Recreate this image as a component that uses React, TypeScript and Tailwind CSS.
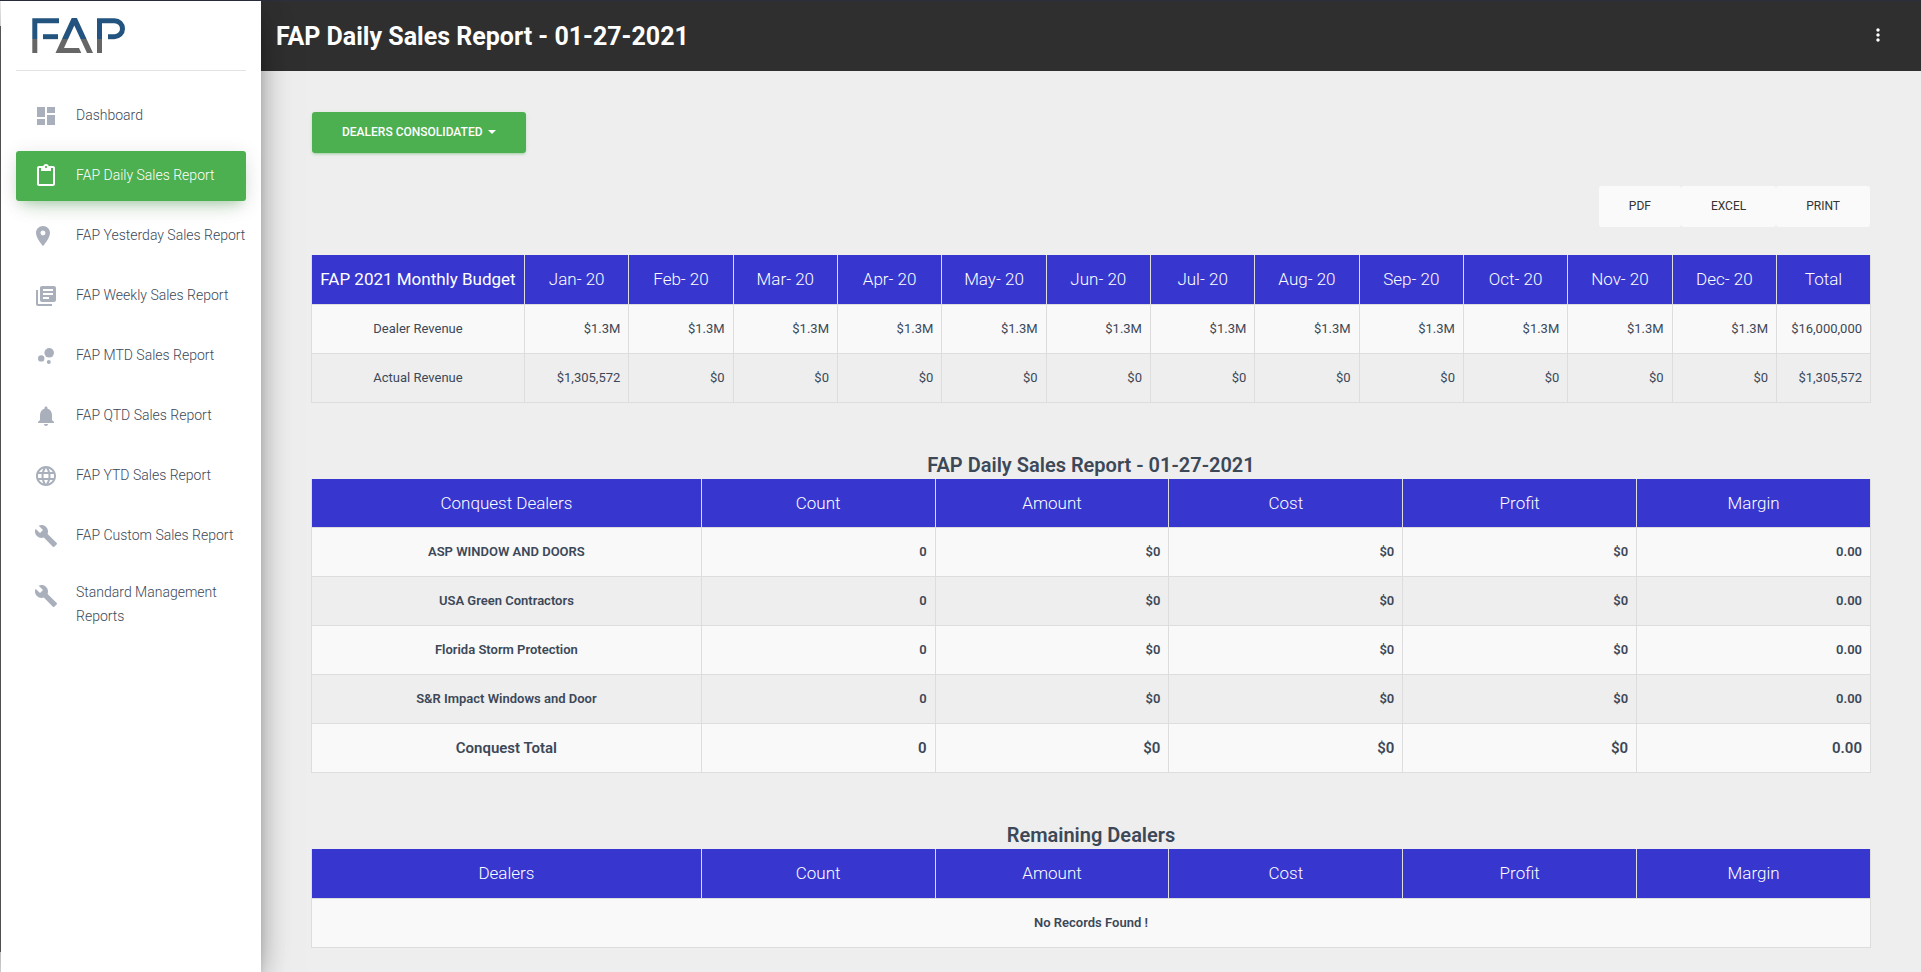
import React from "react";
import {
  MdBubbleChart,
  MdBuild,
  MdContentPaste,
  MdDashboard,
  MdLanguage,
  MdLibraryBooks,
  MdLocationOn,
  MdMoreVert,
  MdNotifications,
} from "react-icons/md";
import type { IconType } from "react-icons";
import clsx from "clsx";

type NavEntry = {
  label: string;
  icon: IconType;
  active?: boolean;
  iconStart?: boolean;
  wraps?: boolean;
};

const NAV: NavEntry[] = [
  { label: "Dashboard", icon: MdDashboard },
  { label: "FAP Daily Sales Report", icon: MdContentPaste, active: true },
  { label: "FAP Yesterday Sales Report", icon: MdLocationOn, iconStart: true },
  { label: "FAP Weekly Sales Report", icon: MdLibraryBooks },
  { label: "FAP MTD Sales Report", icon: MdBubbleChart },
  { label: "FAP QTD Sales Report", icon: MdNotifications },
  { label: "FAP YTD Sales Report", icon: MdLanguage },
  { label: "FAP Custom Sales Report", icon: MdBuild },
  { label: "Standard Management Reports", icon: MdBuild, wraps: true },
];

const MONTHS = ["Jan", "Feb", "Mar", "Apr", "May", "Jun", "Jul", "Aug", "Sep", "Oct", "Nov", "Dec"];

const BUDGET_ROWS = [
  { label: "Dealer Revenue", values: [...MONTHS.map(() => "$1.3M"), "$16,000,000"] },
  {
    label: "Actual Revenue",
    values: [...MONTHS.map((m) => (m === "Jan" ? "$1,305,572" : "$0")), "$1,305,572"],
  },
];

const DEALERS = [
  "ASP WINDOW AND DOORS",
  "USA Green Contractors",
  "Florida Storm Protection",
  "S&R Impact Windows and Door",
];

const FIGURE_COLUMNS = ["Count", "Amount", "Cost", "Profit", "Margin"];
const FIGURES = ["0", "$0", "$0", "$0", "0.00"];

const TABLE = "w-full table-fixed border-collapse text-[13px] leading-5";
const HEAD_CELL =
  "h-[49px] border-x border-b border-[#dddddd] px-0 text-center text-[17px] font-light whitespace-nowrap";
const CELL = "h-[49px] border border-[#dddddd] px-2";
const STRIPE = "odd:bg-[#f9f9f9]";

function Logo() {
  return (
    <svg viewBox="0 0 94 36" className="h-9 w-[94px]" role="img" aria-label="FAP" fill="none">
      <defs>
        <linearGradient id="logo-tone" gradientUnits="userSpaceOnUse" x1="0" y1="0" x2="0" y2="36">
          <stop offset="0.59" stopColor="#22547f" />
          <stop offset="0.59" stopColor="#666666" />
        </linearGradient>
      </defs>
      <g stroke="url(#logo-tone)" strokeWidth="5">
        <path d="M27 2.7H2.8V35" />
        <path d="M11 18.7H26" />
        <path d="M67.5 35V2.7H82.5a8 8 0 0 1 0 16H76" />
      </g>
      <path
        fill="url(#logo-tone)"
        d="M39.7 0h5.2L61 35h-6L42.3 7.5 32 30h15l2.3 5H23.5Z"
      />
    </svg>
  );
}

function Sidebar() {
  return (
    <aside className="relative z-10 w-[260px] shrink-0 bg-white shadow-[0_16px_38px_-12px_rgba(0,0,0,0.56),0_4px_25px_0_rgba(0,0,0,0.12),0_8px_10px_-5px_rgba(0,0,0,0.2)]">
      <div className="mx-[15px] flex h-[70px] items-start border-b border-[#e3e3e3] px-4 pt-[17px]">
        <a href="#home">
          <Logo />
        </a>
      </div>
      <nav className="px-[15px] pt-5">
        <ul className="flex flex-col gap-[10px]">
          {NAV.map(({ label, icon: Icon, active, iconStart, wraps }) => (
            <li key={label}>
              <a
                href="#report"
                aria-current={active ? "page" : undefined}
                className={clsx(
                  "flex items-start gap-[15px] rounded-[3px] pt-[9px] pb-[10px] pl-[15px] text-sm font-light",
                  active
                    ? "bg-[#4caf50] text-white shadow-[0_12px_20px_-10px_rgba(76,175,80,0.28),0_4px_20px_0_rgba(0,0,0,0.12),0_7px_8px_-5px_rgba(76,175,80,0.2)]"
                    : "text-[#3c4858]",
                )}
              >
                <span
                  className={clsx(
                    "mt-px flex h-[30px] w-[30px] shrink-0 items-center",
                    iconStart ? "justify-start" : "justify-center",
                    active ? "text-white" : "text-[#a9afbb]",
                  )}
                >
                  <Icon size={24} />
                </span>
                <span className={wraps ? "leading-6" : "leading-[30px] whitespace-nowrap"}>{label}</span>
              </a>
            </li>
          ))}
        </ul>
      </nav>
    </aside>
  );
}

function BudgetTable() {
  return (
    <table className={TABLE}>
      <colgroup>
        <col className="w-[213px]" />
        {MONTHS.map((m) => (
          <col key={m} />
        ))}
        <col className="w-[94px]" />
      </colgroup>
      <thead className="bg-[#3737cf] text-white">
        <tr>
          <th className="h-[49px] border-x border-b border-[#dddddd] text-center text-[17px] font-normal whitespace-nowrap">
            FAP 2021 Monthly Budget
          </th>
          {MONTHS.map((m) => (
            <th key={m} className={HEAD_CELL}>
              {m}- 20
            </th>
          ))}
          <th className={HEAD_CELL}>Total</th>
        </tr>
      </thead>
      <tbody>
        {BUDGET_ROWS.map((row) => (
          <tr key={row.label} className={STRIPE}>
            <td className={clsx(CELL, "text-center")}>{row.label}</td>
            {row.values.map((value, i) => (
              <td key={i} className={clsx(CELL, "text-right")}>
                {value}
              </td>
            ))}
          </tr>
        ))}
      </tbody>
    </table>
  );
}

function DealerTable({ title, first, children }: { title: string; first: string; children: React.ReactNode }) {
  return (
    <section className="mt-[51px]">
      <h2 className="pb-0.5 text-center text-xl leading-[23px] font-semibold">{title}</h2>
      <table className={TABLE}>
        <colgroup>
          <col className="w-1/4" />
          {FIGURE_COLUMNS.map((c) => (
            <col key={c} className="w-[15%]" />
          ))}
        </colgroup>
        <thead className="bg-[#3737cf] text-white">
          <tr>
            {[first, ...FIGURE_COLUMNS].map((c) => (
              <th key={c} className={HEAD_CELL}>
                {c}
              </th>
            ))}
          </tr>
        </thead>
        <tbody className="font-semibold">{children}</tbody>
      </table>
    </section>
  );
}

function FigureRow({ label, large }: { label: string; large?: boolean }) {
  return (
    <tr className={clsx(STRIPE, large && "text-[15px]")}>
      <td className={clsx(CELL, "text-center")}>{label}</td>
      {FIGURES.map((value, i) => (
        <td key={i} className={clsx(CELL, "text-right")}>
          {value}
        </td>
      ))}
    </tr>
  );
}

export default function App() {
  return (
    <div className="flex min-h-screen flex-col border-t border-[#2c2f40] bg-[#eeeeee] font-['Roboto',sans-serif] text-[#3c4858]">
      <div className="flex grow">
        <div className="flex w-px shrink-0 flex-col">
          <div className="h-[25px] bg-[#f0f0f0]" />
          <div className="grow bg-[#666666]" />
          <div className="h-5 bg-[#f0f0f0]" />
        </div>
        <Sidebar />
        <div className="flex min-w-0 grow flex-col">
          <header className="flex h-[70px] items-center justify-between bg-[#2f2f2f] pr-[33px] pl-[15px] text-white">
            <h1 className="pt-0.5 text-[25px] leading-8 font-bold">FAP Daily Sales Report - 01-27-2021</h1>
            <button type="button" aria-label="More options" className="pb-0.5">
              <MdMoreVert size={20} />
            </button>
          </header>
          <main className="px-[50px] pt-[41px] pb-4">
            <div className="px-px">
              <button
                type="button"
                className="flex h-[41px] items-center gap-[5px] rounded-[3px] bg-[#4caf50] px-[30px] pb-0.5 text-xs font-medium text-white uppercase shadow-[0_2px_2px_0_rgba(76,175,80,0.14),0_3px_1px_-2px_rgba(76,175,80,0.2),0_1px_5px_0_rgba(76,175,80,0.12)]"
              >
                Dealers Consolidated
                <span className="border-x-4 border-t-4 border-x-transparent border-t-white" />
              </button>
            </div>
            <div className="mt-[33px] flex justify-end px-px">
              {["PDF", "Excel", "Print"].map((label) => (
                <button
                  key={label}
                  type="button"
                  className="h-[41px] rounded-[3px] bg-[#fafafa] px-[30px] pb-0.5 text-xs text-[#333333] uppercase"
                >
                  {label}
                </button>
              ))}
            </div>
            <div className="mt-7">
              <BudgetTable />
            </div>
            <DealerTable title="FAP Daily Sales Report - 01-27-2021" first="Conquest Dealers">
              {DEALERS.map((name) => (
                <FigureRow key={name} label={name} />
              ))}
              <FigureRow label="Conquest Total" large />
            </DealerTable>
            <DealerTable title="Remaining Dealers" first="Dealers">
              <tr className={STRIPE}>
                <td colSpan={6} className={clsx(CELL, "text-center")}>
                  No Records Found !
                </td>
              </tr>
            </DealerTable>
          </main>
        </div>
      </div>
    </div>
  );
}
